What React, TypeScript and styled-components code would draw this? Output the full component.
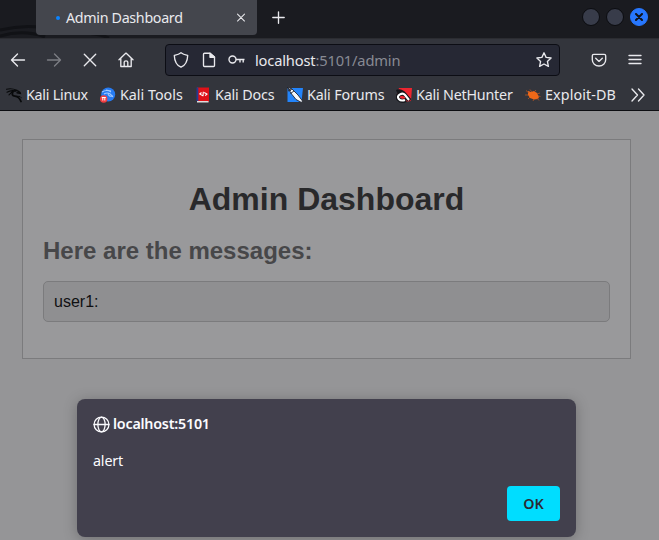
import React from 'react';
import styled, { createGlobalStyle } from 'styled-components';

const GlobalStyle = createGlobalStyle`
  * { box-sizing: border-box; }
  body { margin: 0; overflow: hidden; background: #959597; }
  button { padding: 0; border: 0; background: none; color: inherit; font: inherit; }
  svg { display: block; }
`;

const Window = styled.div`
  display: flex;
  flex-direction: column;
  width: 659px;
  height: 540px;
  overflow: hidden;
  background: #959597;
  color: #e9e9ed;
  font: 14.3px/20px "Noto Sans", sans-serif;
`;

const TabStrip = styled.header`
  position: relative;
  display: flex;
  align-items: flex-start;
  height: 38px;
  flex: none;
  padding-left: 36px;
  background: #1a1b20;
`;

const StripTexture = styled.svg`
  position: absolute;
  left: 0;
  top: 0;
`;

const Tab = styled.div`
  position: relative;
  display: flex;
  align-items: center;
  width: 221px;
  height: 35px;
  padding: 0 9px 0 20px;
  border-radius: 0 0 4px 4px;
  background: #44464d;
`;

const LoadingDot = styled.span`
  width: 4px;
  height: 4px;
  margin-right: 6px;
  border-radius: 50%;
  background: #0a84ff;
`;

const Text = styled.span<{ $spacing?: number }>`
  white-space: nowrap;
  letter-spacing: ${p => p.$spacing ?? 0}px;
`;

const CloseTab = styled.button`
  width: 14px;
  height: 14px;
  margin-left: auto;
`;

const NewTab = styled.button`
  margin: 10px 0 0 14px;
`;

const WindowControls = styled.div`
  display: flex;
  gap: 6px;
  margin: 8px 11px 0 auto;
`;

const Control = styled.span<{ $close?: boolean }>`
  display: grid;
  place-items: center;
  width: 18px;
  height: 18px;
  border-radius: 50%;
  border: 1px solid ${p => (p.$close ? '#2777ff' : '#0b0c10')};
  background: ${p => (p.$close ? '#2777ff' : '#383c4a')};
`;

const Toolbar = styled.nav`
  display: flex;
  align-items: center;
  height: 41px;
  flex: none;
  padding: 1px 16px 0 10px;
  border-top: 1px solid #2b2c31;
  background: #33353c;
`;

const ToolButton = styled.button<{ $dim?: boolean; $gap?: number }>`
  margin-right: ${p => p.$gap ?? 20}px;
  opacity: ${p => (p.$dim ? 0.4 : 1)};
`;

const AddressBar = styled.div`
  display: flex;
  align-items: center;
  width: 395px;
  height: 32px;
  margin: 0 31px 0 -1px;
  padding: 0 7px;
  border: 1px solid #0c0d14;
  border-radius: 4px;
  background: #262834;
  font-size: 14.7px;
`;

const AddressIcon = styled.span<{ $gap: number }>`
  margin-right: ${p => p.$gap}px;
`;

const UrlRest = styled.span`
  color: #888a93;
`;

const StarButton = styled.button`
  margin-left: auto;
`;

const Bookmarks = styled.nav`
  display: flex;
  align-items: center;
  height: 32px;
  flex: none;
  padding: 1px 0 0 6px;
  border-bottom: 1px solid #0d0e12;
  background: #33353c;
`;

const Bookmark = styled.a<{ $width: number }>`
  display: flex;
  align-items: center;
  gap: 4px;
  width: ${p => p.$width}px;
  flex: none;
`;

const Page = styled.main`
  position: relative;
  flex: 1;
  padding: 28px 28px 0 22px;
  font-family: "Liberation Sans", Arial, sans-serif;
`;

const Card = styled.section`
  height: 220px;
  padding: 41px 20px 0;
  border: 1px solid #7b7b7d;
  background: #99999b;
`;

const Title = styled.h1`
  margin: 0;
  color: #29292b;
  font-size: 32px;
  line-height: 37px;
  text-align: center;
`;

const Subtitle = styled.h2`
  margin: 19px 0 16px;
  color: #474749;
  font-size: 24px;
  line-height: 28px;
`;

const Message = styled.div`
  height: 41px;
  padding: 9px 10px;
  border: 1px solid #7b7b7d;
  border-radius: 5px;
  background: #8f8f91;
  color: #101012;
  font-size: 16px;
  line-height: 21px;
`;

const Dialog = styled.section`
  position: absolute;
  left: 77px;
  top: 288px;
  display: flex;
  flex-direction: column;
  width: 499px;
  height: 138px;
  padding: 15px 16px 16px;
  border-radius: 8px;
  background: #42404d;
  box-shadow: 0 2px 14px rgba(0, 0, 0, .25);
  color: #fbfbfe;
  font: 14.3px/20px "Noto Sans", sans-serif;
`;

const Origin = styled.div`
  display: flex;
  align-items: center;
  gap: 3px;
  font-weight: 600;
`;

const AlertText = styled.p`
  margin: 17px 0 0;
  letter-spacing: -0.15px;
`;

const OkButton = styled.button`
  width: 53px;
  height: 35px;
  margin: auto 0 0 auto;
  border-radius: 4px;
  background: #00ddff;
  color: #2b2a33;
  font-weight: 600;
`;

const Icon = ({ children, size = 16, stroke = 1.35 }: { children: React.ReactNode; size?: number; stroke?: number }) => (
  <svg width={size} height={size} viewBox="0 0 16 16" fill="none" stroke="currentColor" strokeWidth={stroke} strokeLinecap="round" strokeLinejoin="round">
    {children}
  </svg>
);

const KaliIcon = () => (
  <svg width="16" height="16" viewBox="0 0 16 16" fill="none" stroke="#08090a" strokeLinecap="round">
    <path d="M.5 2.3Q5 .8 11 3.2M1 5.2Q5 2.8 9.5 4M3 7.8 6 5" strokeWidth="1.1" />
    <path d="M7 4.5Q5 8.8 9 9.2t6 5.3" strokeWidth="1.8" />
    <path d="M8.5 4q3-1.2 5.5 1.4l.3 1L11 5.7" strokeWidth="1.4" />
    <path d="m11 9.3 3 .2 1.5 1.5" strokeWidth=".9" />
  </svg>
);

const ToolsIcon = () => (
  <svg width="16" height="16" viewBox="0 0 16 16">
    <circle cx="8.2" cy="7.5" r="7" fill="#267bf2" />
    <path d="M2 5q5-3 9 0M4 7q5-3 9 3M8 6q0 4 5 3M6 3l5 1" fill="none" stroke="#a6ccff" strokeWidth="1.1" />
    <circle cx="3.7" cy="12" r="3.7" fill="#f13e42" />
    <path d="M1.8 10.5h4M2.8 10.5v3M4.8 10.5v3" stroke="#fff" />
  </svg>
);

const DocsIcon = () => (
  <svg width="16" height="16" viewBox="0 0 16 16">
    <path d="M2 .5h12V15H2z" fill="#df1118" />
    <path d="M1.5.5h1.8V14H1.5z" fill="#253a93" />
    <path d="M2 14h11.5v1.5H2z" fill="#ddd" />
    <path d="M6.5 5.5 4.8 7l2.7 1.6M8 9.2l.3-4.4M9.2 5.5 12 7l-1.8 1.7" fill="none" stroke="#fff" strokeWidth="1.1" />
  </svg>
);

const ForumsIcon = () => (
  <svg width="16" height="16" viewBox="0 0 16 16">
    <path d="M.5 1H16l-1.5 14H.5Z" fill="#2384fa" />
    <path d="m0 0 5 2 6 6 4.5 6-1 1.5-5.5-3-4-5Z" fill="#f4f6f9" stroke="#222630" strokeWidth=".9" />
    <path d="m0 0 4 4M1 4l4-2M3.5 6.5 7 4" stroke="#222630" strokeWidth=".9" />
  </svg>
);

const NetHunterIcon = () => (
  <svg width="16" height="16" viewBox="0 0 16 16">
    <path d="M3 1h13l-1 13-8 1-7-5Z" fill="#ec2630" />
    <path d="M0 3q4-2 8 1l7 8-1 2-7-6-5 0Z" fill="#15171c" />
    <path d="M10 13Q5 15 2.5 12T4 7.2Q7 5.5 9 8l4 5" fill="none" stroke="#15171c" strokeWidth="4.2" />
    <path d="M9 13Q5 14.5 2.8 12T4 7.4Q7 5.7 9 8l4 5" fill="none" stroke="#fff" strokeWidth="2.1" />
    <path d="M6 10.5h3" stroke="#ec2630" strokeWidth="1.6" />
  </svg>
);

const ExploitIcon = () => (
  <svg width="16" height="16" viewBox="0 0 16 16">
    <path d="M3 4 6 5l3-1 3 2 2 4-1 2-4 .5L5 11 3 8Z" fill="#ef6818" />
    <path d="M4 6 1 3.5M7 5 5 2.5M9 5l2-2M3 8 0 8M5 10l-2 2M9 12l-1 2M12 11l2 2.5M12 7l3-1M13 9l2.5.5" stroke="#b75622" strokeWidth=".8" />
  </svg>
);

const bookmarks = [
  { name: 'Kali Linux', width: 94, spacing: -0.25, icon: <KaliIcon /> },
  { name: 'Kali Tools', width: 95, spacing: 0, icon: <ToolsIcon /> },
  { name: 'Kali Docs', width: 92, spacing: -0.15, icon: <DocsIcon /> },
  { name: 'Kali Forums', width: 109, spacing: -0.15, icon: <ForumsIcon /> },
  { name: 'Kali NetHunter', width: 129, spacing: -0.2, icon: <NetHunterIcon /> },
  { name: 'Exploit-DB', width: 105, spacing: 0.12, icon: <ExploitIcon /> },
];

export default function App() {
  return (
    <Window>
      <GlobalStyle />
      <TabStrip>
        <StripTexture width="120" height="38" fill="none">
          <path d="M0 30q20-5 40-3M0 36q24-7 45 1M85 33q15 1 24 5" stroke="#111216" strokeWidth="3" />
        </StripTexture>
        <Tab>
          <LoadingDot />
          <Text $spacing={-0.33}>Admin Dashboard</Text>
          <CloseTab aria-label="Close tab">
            <Icon size={14} stroke={1.2}><path d="m4 3.5 8 8m0-8-8 8" /></Icon>
          </CloseTab>
        </Tab>
        <NewTab aria-label="New tab"><Icon><path d="M7.5 1.8v11.4M1.8 7.5h11.4" /></Icon></NewTab>
        <WindowControls>
          <Control />
          <Control />
          <Control $close>
            <svg width="8" height="8" viewBox="0 0 8 8"><path d="m1 1 6 6m0-6L1 7" stroke="#10131a" strokeWidth="2" strokeLinecap="round" /></svg>
          </Control>
        </WindowControls>
      </TabStrip>
      <Toolbar>
        <ToolButton aria-label="Back"><Icon><path d="M14.5 8H1.5m6-6-6 6 6 6" /></Icon></ToolButton>
        <ToolButton aria-label="Forward" $dim><Icon><path d="M1.5 8h13m-6-6 6 6-6 6" /></Icon></ToolButton>
        <ToolButton aria-label="Stop"><Icon><path d="m2.3 2.3 11.4 11.4m0-11.4L2.3 13.7" /></Icon></ToolButton>
        <ToolButton aria-label="Home" $gap={32}>
          <Icon><path d="m1 7.7 7-6.6 7 6.6M2.8 6.5v8h10.4v-8M6.2 14.2V10q0-1.2 1.8-1.2T9.8 10v4.2" /></Icon>
        </ToolButton>
        <AddressBar>
          <AddressIcon $gap={12}><Icon><path d="M8 .8c2.1 1.8 4.5 2.2 6.7 2.6-.2 5.6-1.8 9.6-6.7 11.8C3.1 13 1.5 9 1.3 3.4 3.5 3 5.9 2.6 8 .8Z" /></Icon></AddressIcon>
          <AddressIcon $gap={11}><Icon><path d="M3.5 1.2H9L13.5 5v8.5q0 1-1 1h-9q-1 0-1-1V2.2q0-1 1-1Z" /><path d="M9 1.2v4h4.5Z" fill="currentColor" /></Icon></AddressIcon>
          <AddressIcon $gap={10}>
            <svg width="17" height="16" viewBox="0 0 17 16" fill="none" stroke="currentColor" strokeWidth="1.4"><circle cx="4.5" cy="7.5" r="3.5" /><path d="M8 7.5h8.5M12 7.5v3M15.2 7.5v3" /></svg>
          </AddressIcon>
          <Text $spacing={-0.18}>localhost<UrlRest>:5101/admin</UrlRest></Text>
          <StarButton aria-label="Bookmark this page"><Icon><path d="m8 .8 2.1 4.6 5 .6-3.7 3.4 1 5L8 12l-4.4 2.4 1-5L.9 6l5-.6Z" /></Icon></StarButton>
        </AddressBar>
        <ToolButton aria-label="Pocket"><Icon><path d="M2.8 2.3h10.4q1.5 0 1.5 1.5v4a6.7 6.2 0 0 1-13.4 0v-4q0-1.5 1.5-1.5ZM4.7 6.3 8 9.4l3.3-3.1" /></Icon></ToolButton>
        <ToolButton aria-label="Menu" $gap={0}><Icon><path d="M2 3.5h12M2 7.5h12M2 11.5h12" /></Icon></ToolButton>
      </Toolbar>
      <Bookmarks>
        {bookmarks.map(b => (
          <Bookmark key={b.name} $width={b.width}>{b.icon}<Text $spacing={b.spacing}>{b.name}</Text></Bookmark>
        ))}
        <Icon><path d="m2 2 5.5 6L2 14M8.5 2 14 8l-5.5 6" /></Icon>
      </Bookmarks>
      <Page>
        <Card>
          <Title>Admin Dashboard</Title>
          <Subtitle>Here are the messages:</Subtitle>
          <Message>user1:</Message>
        </Card>
        <Dialog role="alertdialog">
          <Origin>
            <Icon size={17} stroke={1.2}><circle cx="8" cy="8" r="7" /><ellipse cx="8" cy="8" rx="3.4" ry="7" /><path d="M1 8h14" /></Icon>
            <Text $spacing={-0.22}>localhost:5101</Text>
          </Origin>
          <AlertText>alert</AlertText>
          <OkButton>OK</OkButton>
        </Dialog>
      </Page>
    </Window>
  );
}
